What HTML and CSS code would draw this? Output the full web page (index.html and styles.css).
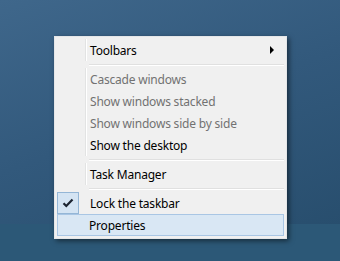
FILE: index.html
```html
<!DOCTYPE html>
<html lang="en">
<head>
  <meta charset="UTF-8">
  <title>Taskbar menu</title>
  <link rel="stylesheet" href="styles.css">
</head>
<body>
  <div class="desktop">
    <!-- Menú contextual de la barra de tareas -->
    <ul class="menu">
      <li class="item">
        <span class="gutter"></span>
        <span class="label">Toolbars</span>
        <span class="arrow"></span>
      </li>
      <li class="sep"></li>
      <li class="item disabled"><span class="gutter"></span><span class="label">Cascade windows</span></li>
      <li class="item disabled"><span class="gutter"></span><span class="label">Show windows stacked</span></li>
      <li class="item disabled"><span class="gutter"></span><span class="label">Show windows side by side</span></li>
      <li class="item"><span class="gutter"></span><span class="label">Show the desktop</span></li>
      <li class="sep"></li>
      <li class="item"><span class="gutter"></span><span class="label">Task Manager</span></li>
      <li class="sep"></li>
      <li class="item">
        <span class="gutter">
          <span class="check">
            <svg width="12" height="10" viewBox="0 0 12 10"><path d="M1.5 5.2 L4.3 8 L10.5 1.5" fill="none" stroke="#1b2330" stroke-width="2.2"/></svg>
          </span>
        </span>
        <span class="label">Lock the taskbar</span>
      </li>
      <li class="item hover"><span class="gutter"></span><span class="label">Properties</span></li>
    </ul>
  </div>
</body>
</html>
```

FILE: styles.css
```css
/* Escritorio */
html, body {
  margin: 0;
  padding: 0;
  height: 100%;
  overflow: hidden;
}
.desktop {
  height: 100%;
  box-sizing: border-box;
  padding: 36px 0 0 54px;
  background:
    linear-gradient(to bottom, transparent 224px, #2c5877 224px),
    linear-gradient(160deg, #3f678b 0%, #32597c 45%, #264c6b 100%);
}
/* Menú */
.menu {
  list-style: none;
  margin: 0;
  padding: 2px;
  width: 227px;
  background: #f0f0f0;
  border: 1px solid #e4e6e8;
  box-shadow: 2px 2px 5px rgba(0, 0, 0, 0.5);
  font-family: "Noto Sans", "Open Sans", sans-serif;
  font-size: 12px;
  letter-spacing: -0.2px;
  color: #000;
}
.item {
  position: relative;
  display: flex;
  align-items: center;
  height: 22px;
  box-sizing: border-box;
}
.gutter {
  width: 28px;
  height: 100%;
  flex: none;
  display: flex;
  align-items: center;
  border-right: 1px solid #e2e3e3;
  box-shadow: 1px 0 0 #fff;
  margin-right: 3px;
}
.label {
  flex: 1;
  padding-left: 1px;
  padding-top: 1px;
}
.disabled {
  color: #727272;
}
.arrow {
  width: 0;
  height: 0;
  border-top: 4px solid transparent;
  border-bottom: 4px solid transparent;
  border-left: 4px solid #000;
  margin-right: 10px;
}
.sep {
  height: 7px;
  display: flex;
  align-items: center;
  padding-left: 32px;
}
.sep::before {
  content: "";
  flex: 1;
  height: 1px;
  background: #e0e0e0;
  border-bottom: 1px solid #fff;
}
/* Casilla marcada */
.check {
  width: 20px;
  height: 20px;
  background: #d4e4f3;
  border: 1px solid #94b6d6;
  display: flex;
  align-items: center;
  justify-content: center;
}
.gutter:has(.check) {
  border-right: none;
  box-shadow: none;
  margin-right: 4px;
}
/* Elemento resaltado */
.hover {
  background: #d9e7f4;
  border: 1px solid #a9c6e4;
}
.hover .gutter {
  border-right: none;
  box-shadow: none;
  width: 27px;
  margin-right: 3px;
}
```
